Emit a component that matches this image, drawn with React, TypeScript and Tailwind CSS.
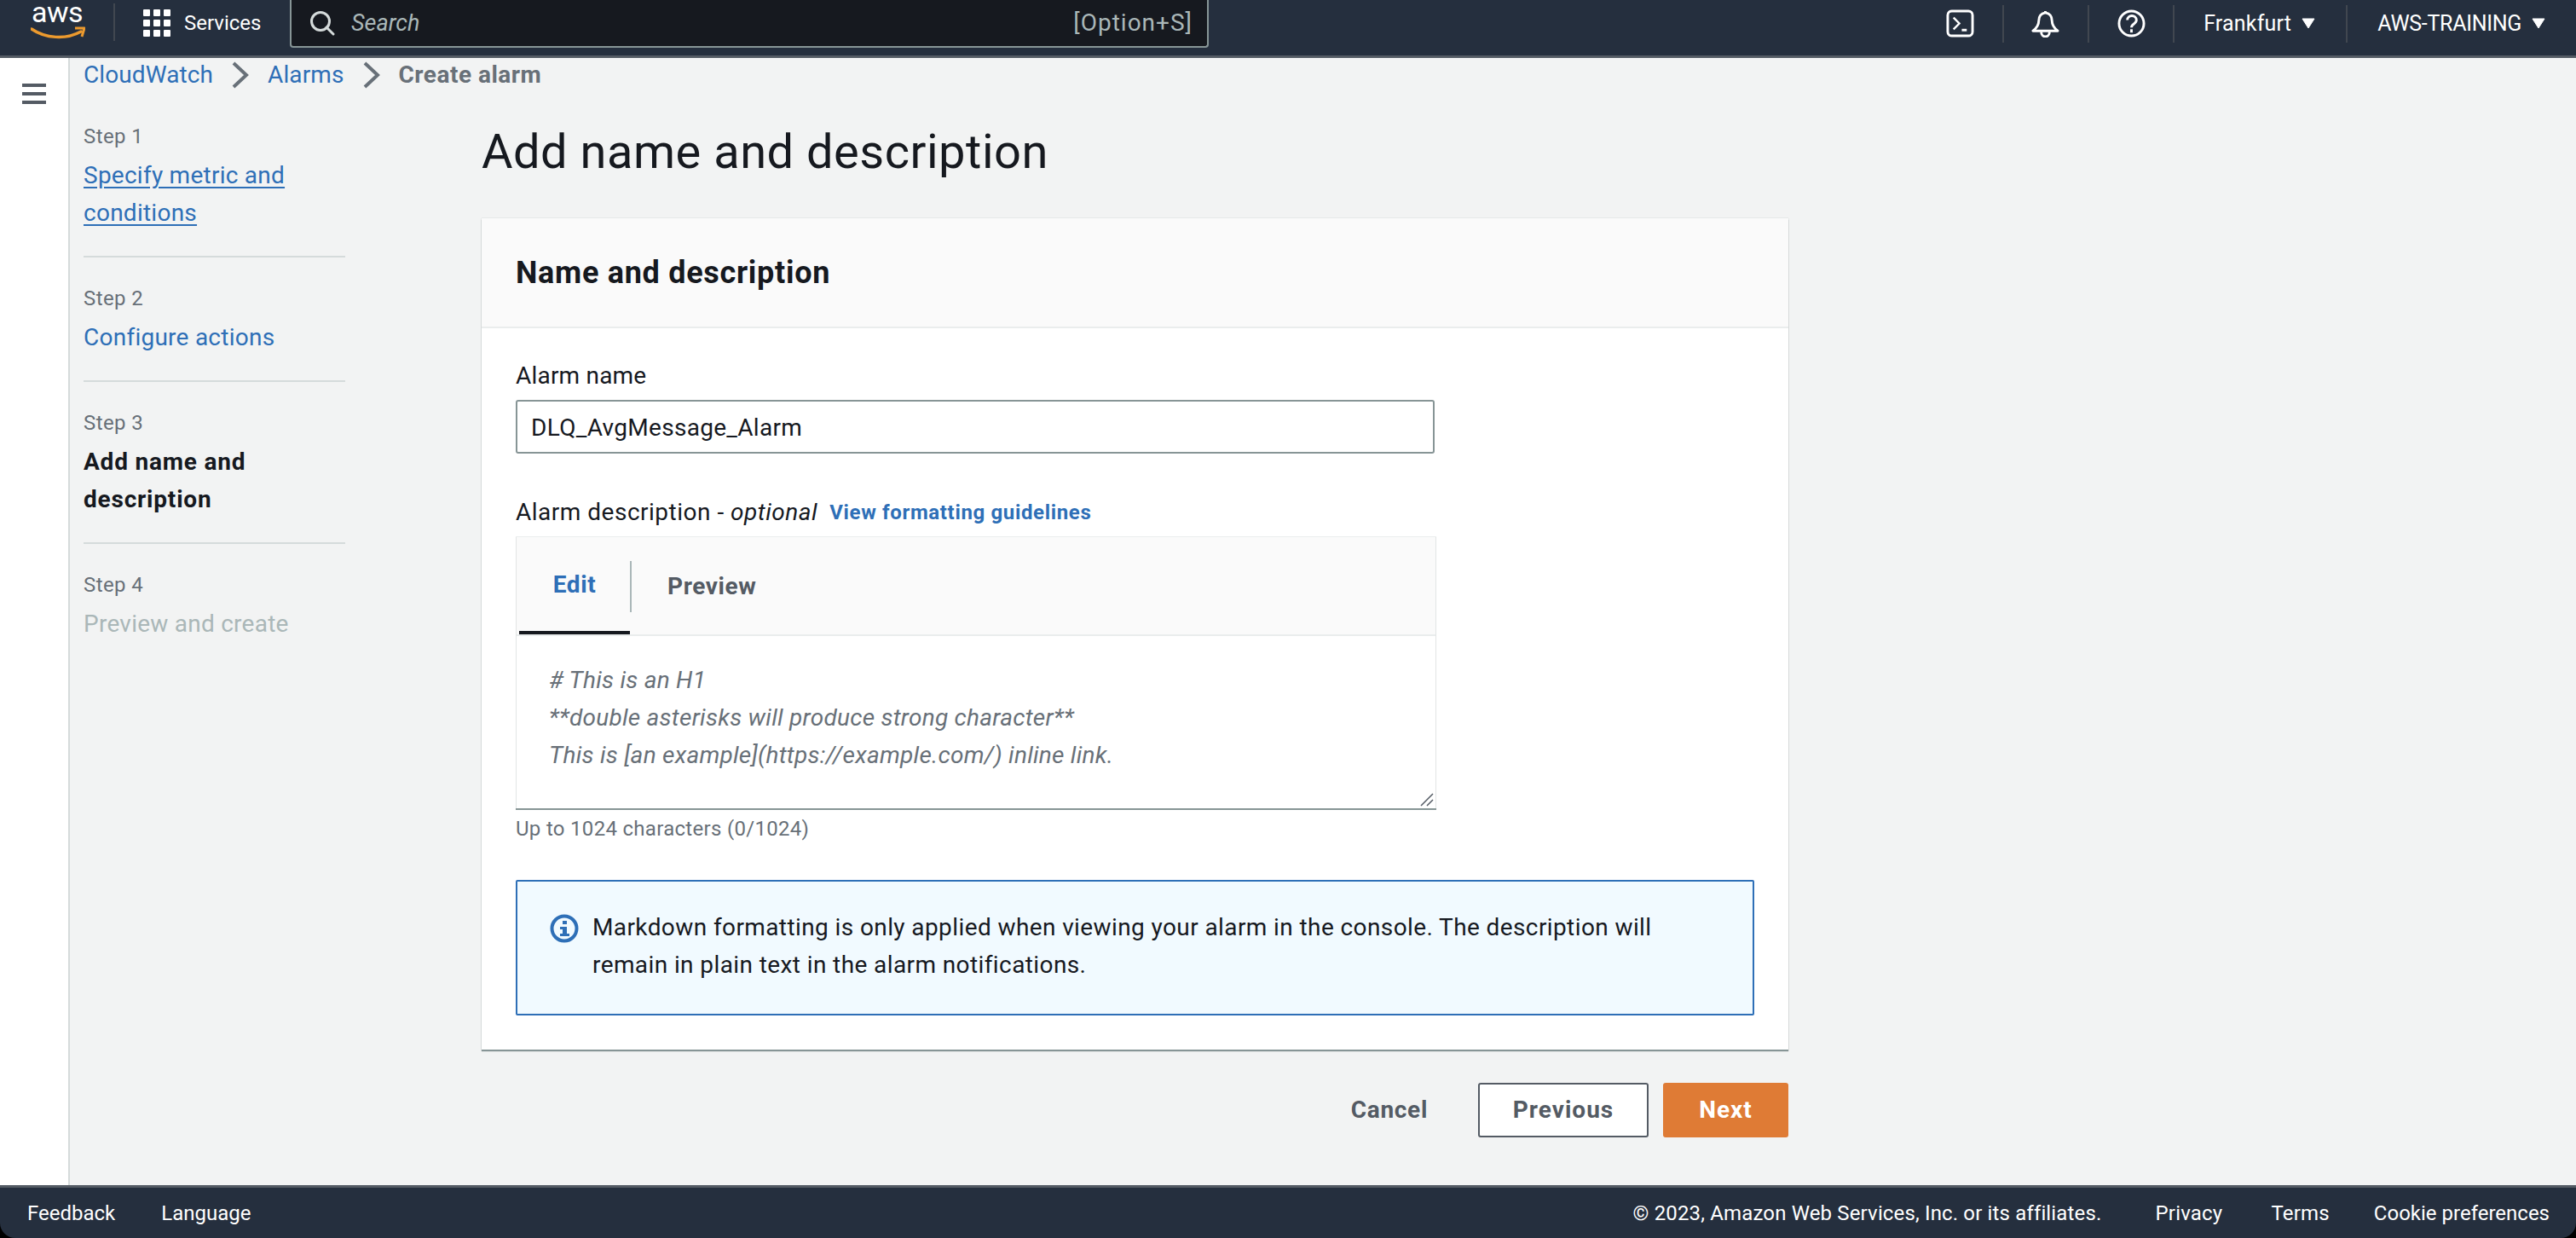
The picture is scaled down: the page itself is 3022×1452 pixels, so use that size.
import React from "react";

const Caret = () => (
  <svg width="16" height="13" viewBox="0 0 16 13" className="shrink-0">
    <path d="M1 1h14L8 12z" fill="#fff" stroke="#fff" strokeWidth="1" strokeLinejoin="round" />
  </svg>
);

const Chevron = () => (
  <svg width="20" height="32" viewBox="0 0 20 32" className="shrink-0">
    <path d="M2 2l15 14L2 30" fill="none" stroke="#687078" strokeWidth="4" />
  </svg>
);

const Sep = () => <div className="w-[2px] h-[44px] bg-[#414750] shrink-0" />;

function TopBar() {
  return (
    <header className="h-[68px] shrink-0 bg-[#252f3e] border-b-[3px] border-[#545b64] flex text-white">
      <div className="w-[133px] h-[50px] shrink-0 relative">
        <span className="absolute left-[37px] top-[2px] text-[34px] leading-[24px] tracking-[-0.5px]">aws</span>
        <svg width="64" height="16" viewBox="0 0 64 16" className="absolute left-[36px] top-[31px]">
          <path d="M1 3c16 11 40 13 58 3" fill="none" stroke="#ec9a2e" strokeWidth="3.5" strokeLinecap="round" />
          <path d="M52 2l11 0-3 10" fill="none" stroke="#ec9a2e" strokeWidth="3" strokeLinejoin="round" />
        </svg>
      </div>
      <div className="mt-[4px]"><Sep /></div>
      <div className="w-[205px] shrink-0 h-[55px] flex items-center pl-[33px] pb-[2px] gap-[16px]">
        <svg width="32" height="32" viewBox="0 0 32 32" fill="#fff" className="shrink-0">
          <rect x="0" y="0" width="8" height="8" rx="1" /><rect x="12" y="0" width="8" height="8" rx="1" /><rect x="24" y="0" width="8" height="8" rx="1" />
          <rect x="0" y="12" width="8" height="8" rx="1" /><rect x="12" y="12" width="8" height="8" rx="1" /><rect x="24" y="12" width="8" height="8" rx="1" />
          <rect x="0" y="24" width="8" height="8" rx="1" /><rect x="12" y="24" width="8" height="8" rx="1" /><rect x="24" y="24" width="8" height="8" rx="1" />
        </svg>
        <span className="text-[24px] leading-[32px]">Services</span>
      </div>
      <div className="w-[1078px] shrink-0 h-[56px] bg-[#16191f] border-x-2 border-b-2 border-[#879596] rounded-b-[4px] flex items-center pl-[21px] pr-[17px]">
        <svg width="30" height="30" viewBox="0 0 30 30" fill="none" stroke="#d5dbdb" strokeWidth="3" className="shrink-0">
          <circle cx="13" cy="13" r="10.5" /><path d="M20 20l8 8" strokeLinecap="round" />
        </svg>
        <span className="ml-[19px] italic text-[27px] text-[#aab7b8]">Search</span>
        <span className="ml-auto text-[28px] tracking-[1px] text-[#aab7b8]">[Option+S]</span>
      </div>
      <div className="flex-1 h-[55px] flex items-center justify-end pr-[36px]">
        <svg width="33" height="33" viewBox="0 0 34 34" fill="none" stroke="#fff" strokeWidth="3" className="shrink-0">
          <rect x="2" y="2" width="30" height="30" rx="5" /><path d="M9 10l7 7-7 7" strokeWidth="2.5" /><path d="M19 25h6" strokeWidth="3" />
        </svg>
        <div className="ml-[33px]"><Sep /></div>
        <svg width="33" height="33" viewBox="0 0 34 34" fill="none" stroke="#fff" strokeWidth="3" strokeLinejoin="round" className="ml-[32px] shrink-0">
          <path d="M17 2v2c-6 1-8 5-8 10 0 5-3 9-7 12h30c-4-3-7-7-7-12 0-5-2-9-8-10" /><path d="M12 27c0 8 10 8 10 0" />
        </svg>
        <div className="ml-[33px]"><Sep /></div>
        <svg width="33" height="33" viewBox="0 0 34 34" fill="none" stroke="#fff" strokeWidth="3" className="ml-[33px] shrink-0">
          <circle cx="17" cy="17" r="15" /><path d="M12 13c0-7 11-7 11 0 0 5-6 4-6 9" strokeWidth="3" /><path d="M17 24v4" />
        </svg>
        <div className="ml-[32px]"><Sep /></div>
        <span className="ml-[34px] text-[25px] tracking-[0.2px]">Frankfurt</span>
        <span className="ml-[12px]"><Caret /></span>
        <div className="ml-[36px]"><Sep /></div>
        <span className="ml-[35px] text-[25px] tracking-[-0.3px]">AWS-TRAINING</span>
        <span className="ml-[12px]"><Caret /></span>
      </div>
    </header>
  );
}

function Step({ n, children, last }: { n: number; children: React.ReactNode; last?: boolean }) {
  return (
    <div className={last ? "pt-[32px]" : "pt-[32px] pb-[28px] border-b-2 border-[#d5dbdb]"}>
      <div className="text-[24px] leading-[32px] tracking-[0.4px] text-[#687078]">Step {n}</div>
      <div className="mt-[8px] text-[28px] leading-[44px] tracking-[0.25px]">{children}</div>
    </div>
  );
}

function StepNav() {
  return (
    <nav className="w-[307px] shrink-0">
      <Step n={1}><a className="text-[#2e6fb7] underline underline-offset-[4px]">Specify metric and conditions</a></Step>
      <Step n={2}><a className="text-[#2e6fb7]">Configure actions</a></Step>
      <Step n={3}><span className="font-bold tracking-[0.8px] text-[#16191f]">Add name and description</span></Step>
      <Step n={4} last><span className="text-[#aab7b8]">Preview and create</span></Step>
    </nav>
  );
}

function DescriptionBox() {
  return (
    <div className="w-[1080px] h-[318px] mt-[7px] flex flex-col bg-white border-x border-[#e2e5e5] shadow-[0_2px_0_#879596,0_-1px_0_#eaeded] relative">
      <div className="h-[116px] shrink-0 bg-[#fafafa] border-b-2 border-[#eaeded] flex items-start pl-[3px] relative">
        <div className="w-[130px] h-[114px] border-b-4 border-[#16191f] flex items-center justify-center pt-[2px] text-[28px] font-bold tracking-[0.6px] text-[#2e6fb7]">Edit</div>
        <div className="w-[2px] h-[60px] bg-[#aab7b8] mt-[28px] shrink-0" />
        <div className="ml-[42px] h-[114px] flex items-center pt-[2px] text-[28px] font-bold tracking-[0.6px] text-[#545b64]">Preview</div>
      </div>
      <div className="pl-[38px] pt-[30px] text-[28px] leading-[44px] tracking-[0.25px] italic text-[#687078]">
        <div># This is an H1</div>
        <div>**double asterisks will produce strong character**</div>
        <div>This is [an example](https://example.com/) inline link.</div>
      </div>
      <svg width="16" height="16" viewBox="0 0 16 16" className="absolute right-[2px] bottom-[2px]">
        <path d="M1 15L15 1M8 15l7-7" stroke="#545b64" strokeWidth="1.5" />
      </svg>
    </div>
  );
}

function InfoAlert() {
  return (
    <div className="mt-[44px] w-[1453px] h-[159px] bg-[#f1faff] border-2 border-[#2e6fb7] rounded-[2px] flex pl-[38px] pr-[100px] pt-[32px]">
      <svg width="34" height="34" viewBox="0 0 34 34" className="shrink-0 mt-[6px]">
        <circle cx="17" cy="17" r="14.5" fill="none" stroke="#2e6fb7" strokeWidth="4" />
        <rect x="15" y="8" width="5" height="4" fill="#2e6fb7" />
        <path d="M12 15h8v8h3v3H12v-3h3v-5h-3z" fill="#2e6fb7" />
      </svg>
      <p className="ml-[16px] text-[28px] leading-[44px] tracking-[0.4px] text-[#16191f]">
        Markdown formatting is only applied when viewing your alarm in the console. The description will remain in plain text in the alarm notifications.
      </p>
    </div>
  );
}

function MainForm() {
  return (
    <main className="w-[1533px] shrink-0">
      <h1 className="text-[56px] leading-[72px] tracking-[0.5px] text-[#16191f] mt-[-8px]">Add name and description</h1>
      <section className="mt-[42px] h-[975px] bg-white shadow-[0_2px_1px_#879596,0_0_1px_#aab7b8]">
        <div className="h-[129px] bg-[#fafafa] border-b-2 border-[#eaeded] flex items-center pl-[40px]">
          <h2 className="text-[36px] font-bold tracking-[0.7px] text-[#16191f]">Name and description</h2>
        </div>
        <div className="pl-[40px] pt-[34px]">
          <div className="text-[28px] leading-[44px] tracking-[0.2px] text-[#16191f]">Alarm name</div>
          <div className="mt-[6px] w-[1078px] h-[63px] bg-white border-2 border-[#879596] rounded-[3px] flex items-center pl-[16px] pt-[3px] text-[28px] tracking-[0.3px] text-[#16191f]">DLQ_AvgMessage_Alarm</div>
          <div className="mt-[47px] flex items-center h-[44px]">
            <span className="text-[28px] tracking-[0.5px] text-[#16191f]">Alarm description - <i>optional</i></span>
            <a className="ml-[14px] text-[24px] font-bold tracking-[0.65px] text-[#2e6fb7]">View formatting guidelines</a>
          </div>
          <DescriptionBox />
          <div className="mt-[8px] text-[24px] leading-[32px] tracking-[0.3px] text-[#687078]">Up to 1024 characters (0/1024)</div>
          <InfoAlert />
        </div>
      </section>
      <div className="mt-[39px] flex items-center justify-end">
        <span className="text-[28px] font-bold tracking-[0.7px] text-[#545b64] mr-[59px]">Cancel</span>
        <button className="w-[200px] h-[64px] bg-white border-2 border-[#545b64] rounded-[3px] text-[28px] font-bold tracking-[1px] text-[#545b64]">Previous</button>
        <button className="ml-[17px] w-[147px] h-[64px] bg-[#df7b35] rounded-[3px] text-[28px] font-bold tracking-[1px] text-white">Next</button>
      </div>
    </main>
  );
}

function Footer() {
  return (
    <div className="bg-black shrink-0">
      <footer className="h-[62px] bg-[#252f3e] border-t-[3px] border-[#545b64] rounded-b-[18px] flex items-center pl-[32px] pr-[31px] text-[24px] text-white">
        <span>Feedback</span>
        <span className="ml-[54px]">Language</span>
        <span className="ml-auto tracking-[0.15px]">© 2023, Amazon Web Services, Inc. or its affiliates.</span>
        <span className="ml-[63px] tracking-[0.2px]">Privacy</span>
        <span className="ml-[57px] tracking-[0.2px]">Terms</span>
        <span className="ml-[52px]">Cookie preferences</span>
      </footer>
    </div>
  );
}

export default function App() {
  return (
    <div className="w-[3022px] h-[1452px] overflow-hidden flex flex-col bg-[#f2f3f3] font-['Roboto',sans-serif]">
      <TopBar />
      <div className="flex-1 flex min-h-0">
        <aside className="w-[82px] shrink-0 bg-white border-r-2 border-[#d5dbdb] pt-[30px] pl-[26px]">
          <svg width="28" height="24" viewBox="0 0 28 24" fill="#545b64">
            <rect width="28" height="4" /><rect y="10" width="28" height="4" /><rect y="20" width="28" height="4" />
          </svg>
        </aside>
        <div className="flex-1 pl-[16px]">
          <div className="h-[40px] flex items-center text-[28px] tracking-[0.1px]">
            <a className="text-[#2e6fb7]">CloudWatch</a>
            <span className="mx-[22px]"><Chevron /></span>
            <a className="text-[#2e6fb7]">Alarms</a>
            <span className="mx-[22px]"><Chevron /></span>
            <span className="font-bold tracking-[0.5px] text-[#687078]">Create alarm</span>
          </div>
          <div className="flex mt-[4px]">
            <StepNav />
            <div className="ml-[160px]"><div className="mt-[38px]"><MainForm /></div></div>
          </div>
        </div>
      </div>
      <Footer />
    </div>
  );
}
